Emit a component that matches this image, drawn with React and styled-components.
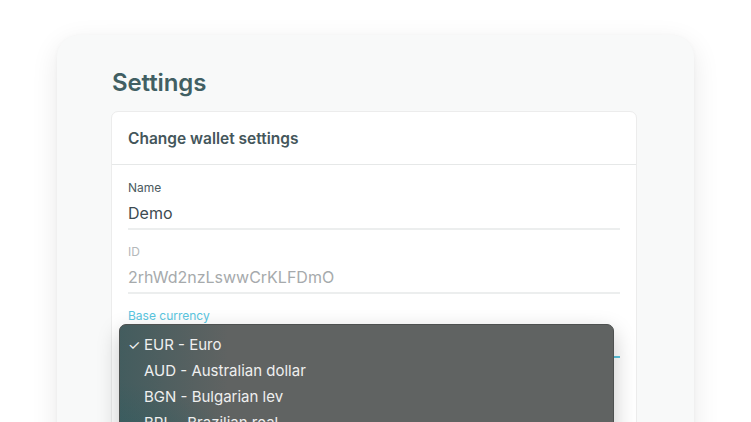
import React from 'react';
import styled, { createGlobalStyle } from 'styled-components';

const GlobalStyle = createGlobalStyle`
  html, body {
    margin: 0;
    padding: 0;
    background: #ffffff;
  }
  body {
    font-family: Inter, "Noto Sans", sans-serif;
    -webkit-font-smoothing: antialiased;
  }
`;

const Page = styled.div`
  height: 422px;
  overflow: hidden;
  padding: 35px 0 0 57px;
  box-sizing: border-box;
`;

const Panel = styled.section`
  width: 637px;
  min-height: 520px;
  box-sizing: border-box;
  padding: 33px 57px 0 54px;
  background: #f8f9f9;
  border-radius: 22px;
  box-shadow: 0 8px 28px rgba(0, 0, 0, 0.09), 0 1px 4px rgba(0, 0, 0, 0.04);
`;

const Title = styled.h1`
  margin: 0 0 14px 1px;
  font-size: 24px;
  line-height: 29px;
  font-weight: 600;
  color: #415f63;
  letter-spacing: -0.1px;
`;

const Card = styled.div`
  background: #ffffff;
  border: 1px solid #ececec;
  border-radius: 7px;
`;

const CardHeader = styled.div`
  height: 52px;
  display: flex;
  align-items: center;
  padding: 0 16px;
  border-bottom: 1px solid #e6e8e8;
  font-size: 15.5px;
  font-weight: 600;
  color: #44565b;
`;

const CardBody = styled.div`
  padding: 15px 16px 120px;
  display: flex;
  flex-direction: column;
  gap: 14px;
`;

const Field = styled.div`
  position: relative;
  display: flex;
  flex-direction: column;
`;

const Label = styled.label`
  font-size: 12px;
  line-height: 16px;
  margin-bottom: 2px;
  color: ${p => (p.$focused ? '#5ac6df' : p.$muted ? '#b4b8ba' : '#4b5b60')};
`;

const Value = styled.div`
  height: 30px;
  line-height: 30px;
  font-size: 16px;
  color: ${p => (p.$muted ? '#a6aaac' : '#3d4b51')};
  border-bottom: 2px solid ${p => (p.$focused ? '#5ac6df' : '#eceeee')};
`;

const Menu = styled.ul`
  position: absolute;
  left: -9px;
  top: 16px;
  width: 495px;
  height: 200px;
  margin: 0;
  padding: 6px 0;
  box-sizing: border-box;
  list-style: none;
  border-radius: 7px;
  border: 1px solid #4e5150;
  background:
    radial-gradient(ellipse 150px 140px at 0% 100%, rgba(36, 92, 97, 0.95) 0%, rgba(36, 92, 97, 0.55) 45%, rgba(36, 92, 97, 0) 100%),
    linear-gradient(90deg, rgba(48, 88, 92, 0.6) 0%, rgba(48, 88, 92, 0) 22%),
    #606362;
  box-shadow: 0 8px 22px rgba(0, 0, 0, 0.22);
`;

const Option = styled.li`
  display: flex;
  align-items: center;
  height: 26px;
  padding-left: 8px;
  font-size: 15px;
  font-weight: 400;
  color: #efefef;
`;

const Check = styled.span`
  width: 16px;
  flex-shrink: 0;
  font-size: 14px;
  color: #f2f2f2;
`;

const currencies = [
  { code: 'EUR', name: 'Euro', selected: true },
  { code: 'AUD', name: 'Australian dollar' },
  { code: 'BGN', name: 'Bulgarian lev' },
  { code: 'BRL', name: 'Brazilian real' },
  { code: 'CAD', name: 'Canadian dollar' },
  { code: 'CHF', name: 'Swiss franc' },
  { code: 'CNY', name: 'Chinese yuan' },
];

const App = () => (
  <Page>
    <GlobalStyle />
    <Panel>
      <Title>Settings</Title>
      <Card>
        <CardHeader>Change wallet settings</CardHeader>
        <CardBody>
          <Field>
            <Label>Name</Label>
            <Value>Demo</Value>
          </Field>
          <Field>
            <Label $muted>ID</Label>
            <Value $muted>2rhWd2nzLswwCrKLFDmO</Value>
          </Field>
          <Field>
            <Label $focused>Base currency</Label>
            <Value $focused>EUR - Euro</Value>
            <Menu>
              {currencies.map(c => (
                <Option key={c.code}>
                  <Check>{c.selected ? '✓' : ''}</Check>
                  <span>{c.code} - {c.name}</span>
                </Option>
              ))}
            </Menu>
          </Field>
        </CardBody>
      </Card>
    </Panel>
  </Page>
);

export default App;
